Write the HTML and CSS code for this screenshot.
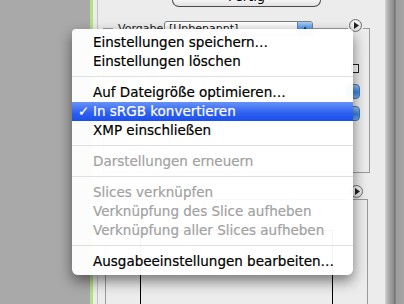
FILE: index.html
```html
<!DOCTYPE html>
<html lang="de">
<head>
    <meta charset="UTF-8">
    <meta name="viewport" content="width=device-width, initial-scale=1.0">
    <title>Für Web speichern</title>
    <link rel="stylesheet" href="styles.css">
</head>
<body>
    <div class="screen">
        <div class="preview"></div>
        <div class="strip"></div>
        <div class="panel">
            <div class="inner">
                <div class="done"><span class="done-text">Fertig</span></div>

                <div class="group">
                    <div class="group-head">
                        <span class="label">Vorgabe:</span>
                        <span class="popup">
                            <span class="popup-text">[Unbenannt]</span>
                            <span class="popup-arrow">&#9650;</span>
                        </span>
                        <span class="head-line"></span>
                        <span class="round-wrap">
                            <span class="round-btn">
                                <svg width="5" height="7" viewBox="0 0 5 7"><path d="M0 0 L5 3.5 L0 7 Z" fill="#222"/></svg>
                            </span>
                        </span>
                    </div>
                    <div class="group-side">
                        <span class="check"></span>
                        <span class="stepper"></span>
                        <span class="stepper"></span>
                    </div>
                </div>

                <div class="sub-head">
                    <span class="round-btn">
                        <svg width="5" height="7" viewBox="0 0 5 7"><path d="M0 0 L5 3.5 L0 7 Z" fill="#222"/></svg>
                    </span>
                </div>

                <div class="group group-lower">
                    <div class="frame"></div>
                </div>
            </div>
        </div>
        <div class="edge"></div>
    </div>

    <div class="menu">
        <div class="item">Einstellungen speichern…</div>
        <div class="item">Einstellungen löschen</div>
        <div class="sep"></div>
        <div class="item">Auf Dateigröße optimieren…</div>
        <div class="item selected"><span class="tick">✓</span>In sRGB konvertieren</div>
        <div class="item">XMP einschließen</div>
        <div class="sep"></div>
        <div class="item disabled">Darstellungen erneuern</div>
        <div class="sep"></div>
        <div class="item disabled">Slices verknüpfen</div>
        <div class="item disabled">Verknüpfung des Slice aufheben</div>
        <div class="item disabled">Verknüpfung aller Slices aufheben</div>
        <div class="sep"></div>
        <div class="item">Ausgabeeinstellungen bearbeiten…</div>
    </div>
</body>
</html>
```
FILE: styles.css
```css
* {
    margin: 0;
    padding: 0;
    box-sizing: border-box;
}

body {
    font-family: "DejaVu Sans", sans-serif;
    width: 404px;
    height: 304px;
    overflow: hidden;
    background-color: #aaa;
}

.screen {
    display: flex;
    height: 304px;
    overflow: hidden;
}

.preview {
    width: 90px;
    background-color: #a9a9a9;
}

.strip {
    width: 3px;
    background-color: #b2e284;
}

.panel {
    flex: 1;
    padding-left: 4px;
    background-color: #ececec;
}

.inner {
    height: 100%;
    border-left: 1px solid #c4c4c4;
}

.edge {
    width: 19px;
    background: linear-gradient(to right, #d4d4d4 0, #b0b0b0 3px, #888 9px, #686868 10px, #9c9c9c 11px, #a4a4a4 100%);
}

/* Fertig - oben abgeschnitten */
.done {
    margin-left: 74px;
    width: 149px;
    height: 7px;
    border: 1px solid #4a4a4a;
    border-top: none;
    border-radius: 0 0 8px 8px;
    background: linear-gradient(#f4f4f4, #e2e2e2);
    text-align: center;
    font-size: 13px;
    color: #000;
    overflow: hidden;
}

.done-text {
    display: block;
    margin-top: -9px;
    line-height: 12px;
}

.group {
    margin-top: 21px;
    margin-left: 5px;
    width: 267px;
    height: 145px;
    border: 1px solid #9a9a9a;
}

.group-head {
    display: flex;
    align-items: flex-start;
    margin-top: -10px;
    height: 17px;
    padding-left: 9px;
}

.label {
    margin-top: 2px;
    width: 51px;
    height: 15px;
    padding-left: 5px;
    font-size: 11px;
    line-height: 15px;
    color: #222;
    background-color: #ececec;
}

.popup {
    display: flex;
    margin-top: 2px;
    width: 149px;
    height: 15px;
    border: 1px solid #7d7d7d;
    border-radius: 3px;
    background: linear-gradient(#fff, #e6e6e6);
    overflow: hidden;
}

.popup-text {
    flex: 1;
    padding-left: 4px;
    font-size: 11px;
    line-height: 13px;
    color: #111;
}

.popup-arrow {
    width: 15px;
    font-size: 6px;
    line-height: 11px;
    text-align: center;
    color: #1b2a4a;
    background: linear-gradient(#a9cdf6, #4e92e6 55%, #7fb6f2);
    border-left: 1px solid #5c7fae;
}

.head-line {
    flex: 1;
}

.round-wrap {
    display: flex;
    padding: 0 1px;
    margin-right: 6px;
    background-color: #ececec;
}

.round-btn {
    display: flex;
    align-items: center;
    justify-content: center;
    width: 13px;
    height: 13px;
    padding-left: 1px;
    border: 1px solid #707070;
    border-radius: 50%;
    background: radial-gradient(circle at 50% 35%, #fff, #d2d2d2);
}

.group-side {
    display: flex;
    flex-direction: column;
    align-items: flex-end;
    padding-right: 10px;
}

.check {
    margin-top: 28px;
    width: 8px;
    height: 9px;
    border: 1px solid #222;
    background-color: #fff;
}

.stepper {
    margin-top: 11px;
    margin-right: -1px;
    width: 14px;
    height: 15px;
    border-radius: 4px;
    background: linear-gradient(#9cc6f4, #3b84e0 55%, #76b0ef);
    border: 1px solid #4a74a8;
}

.stepper + .stepper {
    margin-top: 7px;
}

.sub-head {
    display: flex;
    justify-content: flex-end;
    margin-top: 12px;
    padding-right: 22px;
}

.group-lower {
    margin-top: 1px;
    margin-left: 7px;
    width: 263px;
    height: 110px;
    border-bottom: none;
}

.frame {
    margin: 30px 0 0 34px;
    width: 193px;
    height: 79px;
    border: 1px solid #000;
    border-bottom: none;
}

/* Popup-Menü */
.menu {
    position: absolute;
    left: 72px;
    top: 29px;
    width: 281px;
    padding: 4px 0;
    background-color: rgba(255, 255, 255, 0.96);
    border-radius: 4px 4px 6px 6px;
    box-shadow: 0 6px 14px rgba(0, 0, 0, 0.5);
    font-size: 13.5px;
    -webkit-text-stroke: 0.2px;
}

.item {
    height: 19px;
    line-height: 19px;
    padding-left: 21px;
    white-space: nowrap;
    color: #000;
}

.item.disabled {
    color: #a2a2a2;
}

.item.selected {
    color: #fff;
    background: linear-gradient(#6792f8, #2c5ff0 60%, #1b4fec);
}

.tick {
    display: inline-block;
    width: 15px;
    margin-left: -15px;
}

.sep {
    height: 1px;
    margin: 5px 0 6px;
    background-color: #e0e0e0;
}
```
